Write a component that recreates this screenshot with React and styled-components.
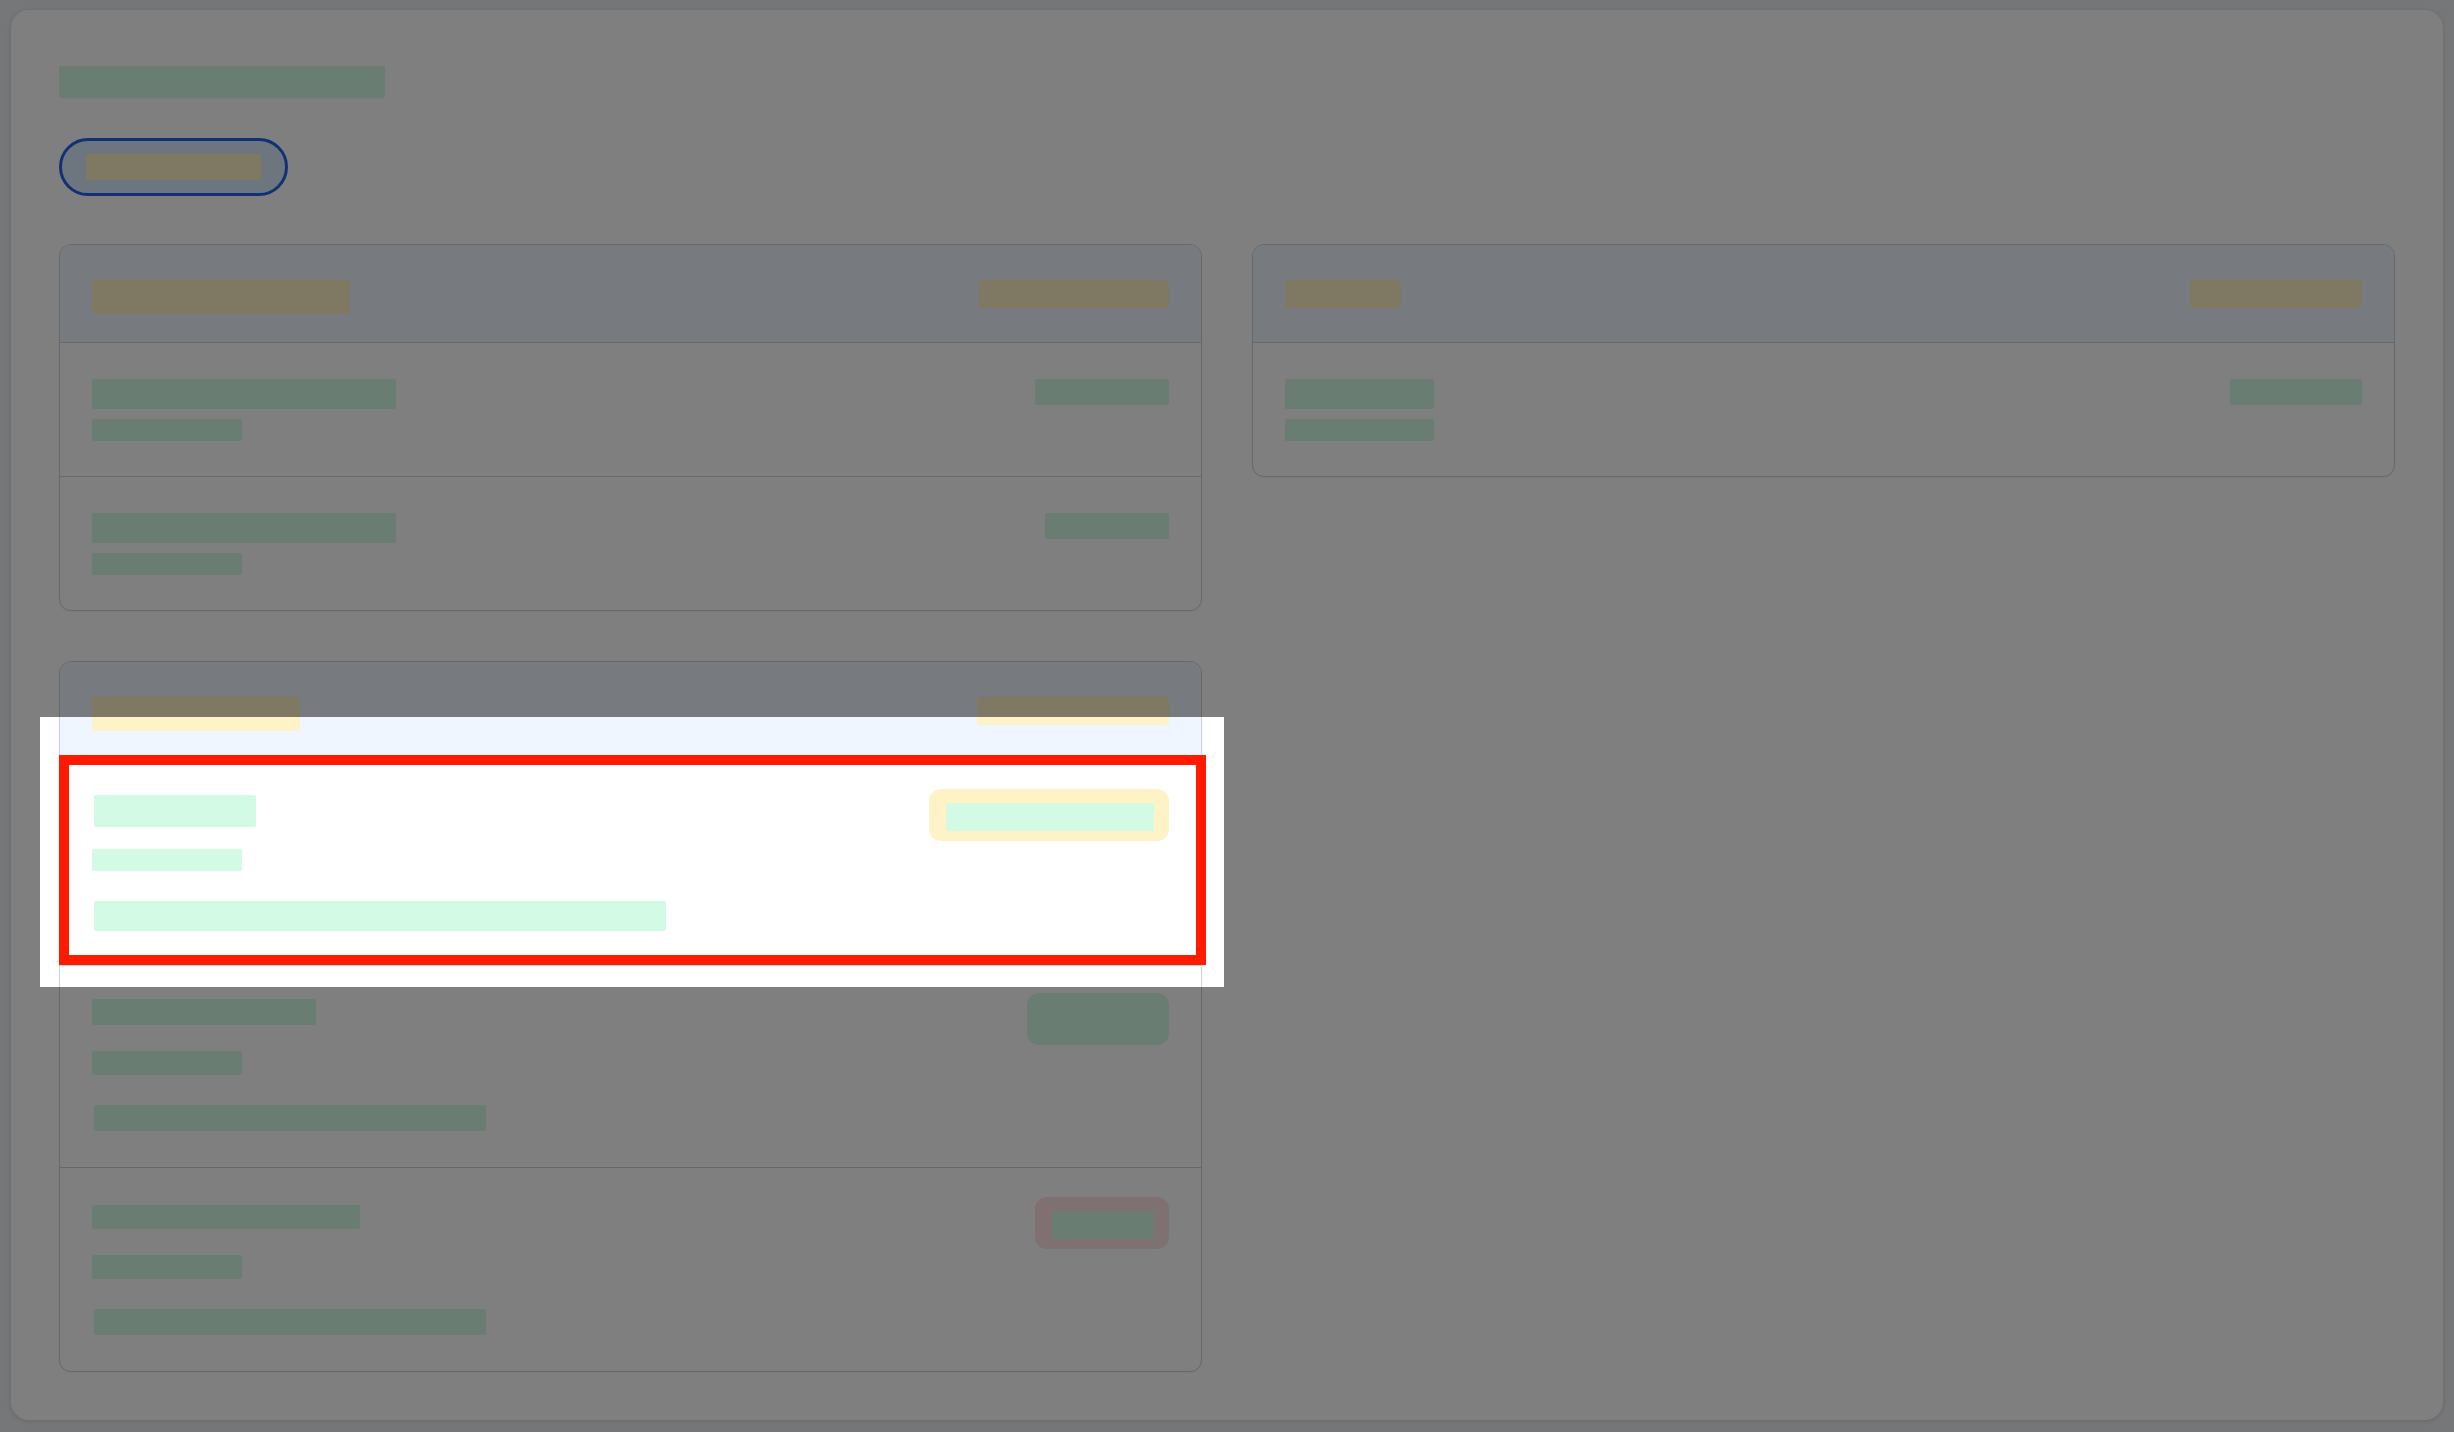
import React from 'react';
import styled, { createGlobalStyle } from 'styled-components';

const GREEN = '#d3fae4';
const YELLOW = '#fef3c7';
const RED_SOFT = '#fee2e2';
const LINE = '#cdd1d8';

const Global = createGlobalStyle`
  html, body { margin: 0; padding: 0; }
  body {
    background: #edeef2;
    font-family: Inter, "Liberation Sans", sans-serif;
  }
  *, *::before, *::after { box-sizing: border-box; }
`;

const Page = styled.div`
  padding: 10px 11px 13px;
`;

const Sheet = styled.main`
  display: flex;
  flex-direction: column;
  align-items: flex-start;
  background: #fff;
  border-radius: 18px;
  box-shadow: 0 1px 5px rgba(0, 0, 0, 0.14);
  padding: 56px 48px 48px;
`;

const Block = styled.span`
  display: block;
  flex: none;
  width: ${(p) => p.$w}px;
  height: ${(p) => p.$h}px;
  margin-top: ${(p) => p.$mt || 0}px;
  margin-left: ${(p) => p.$ml || 0}px;
  background: ${(p) => (p.$tone === 'yellow' ? YELLOW : GREEN)};
  border-radius: 2px;
`;

const Heading = styled.div`
  margin-bottom: 40px;
`;

const Pill = styled.div`
  display: inline-flex;
  padding: 13px 24px;
  border: 3px solid #2563eb;
  background: #dbeafe;
  border-radius: 999px;
  margin-bottom: 48px;
`;

const Grid = styled.div`
  align-self: stretch;
  display: grid;
  grid-template-columns: 1fr 1fr;
  gap: 50px;
  align-items: start;
`;

const Card = styled.section`
  background: #fff;
  border: 1px solid ${LINE};
  border-radius: 12px;
  box-shadow: 0 1px 2px rgba(0, 0, 0, 0.05);
`;

const CardHeader = styled.header`
  display: flex;
  justify-content: space-between;
  align-items: flex-start;
  min-height: 98px;
  padding: 35px 32px 0;
  background: #eff6ff;
  border-bottom: 1px solid ${LINE};
  border-radius: 11px 11px 0 0;
`;

const Row = styled.div`
  position: relative;
  display: flex;
  justify-content: space-between;
  align-items: flex-start;
  padding: ${(p) => p.$pt}px 32px ${(p) => p.$pb}px;
  & + & {
    border-top: 1px solid ${LINE};
  }
`;

const Stack = styled.div`
  display: flex;
  flex-direction: column;
  padding-top: ${(p) => p.$offset || 0}px;
`;

const Badge = styled.span`
  display: inline-flex;
  flex: none;
  padding: 14px 15px 10px 17px;
  border-radius: 12px;
  background: ${(p) => p.$bg};
`;

const Spotlight = styled.div`
  position: absolute;
  top: -43px;
  left: -20px;
  right: -23px;
  bottom: -22px;
  pointer-events: none;
  box-shadow: 0 0 0 4000px rgba(0, 0, 0, 0.5);
  z-index: 10;
`;

const Marker = styled.div`
  position: absolute;
  top: -5px;
  left: -1px;
  right: -5px;
  bottom: 0;
  border: 10px solid #ff1a00;
  pointer-events: none;
  z-index: 11;
`;

const simpleCards = [
  {
    title: 258,
    aside: 190,
    titleH: 34,
    rows: [
      { main: 304, sub: 150, right: 134 },
      { main: 304, sub: 150, right: 124 },
    ],
  },
  {
    title: 116,
    aside: 172,
    titleH: 28,
    rows: [{ main: 149, sub: 149, right: 132 }],
  },
];

const detailRows = [
  {
    pt: 29, pb: 34, offset: 6,
    main: [162, 32], sub: [150, 22, 22], desc: [572, 30, 30],
    badge: { bg: YELLOW, inner: 208 },
    highlighted: true,
  },
  {
    pt: 27, pb: 36, offset: 6,
    main: [224, 26], sub: [150, 24, 26], desc: [392, 26, 30],
    badge: { bg: GREEN, inner: 110 },
  },
  {
    pt: 29, pb: 36, offset: 8,
    main: [268, 24], sub: [150, 24, 26], desc: [392, 26, 30],
    badge: { bg: RED_SOFT, inner: 102 },
  },
];

function SimpleCard({ card }) {
  return (
    <Card>
      <CardHeader>
        <Block $tone="yellow" $w={card.title} $h={card.titleH} />
        <Block $tone="yellow" $w={card.aside} $h={28} />
      </CardHeader>
      {card.rows.map((r, i) => (
        <Row key={i} $pt={36} $pb={35}>
          <Stack>
            <Block $w={r.main} $h={30} />
            <Block $w={r.sub} $h={22} $mt={10} />
          </Stack>
          <Block $w={r.right} $h={26} />
        </Row>
      ))}
    </Card>
  );
}

function DetailCard() {
  return (
    <Card>
      <CardHeader>
        <Block $tone="yellow" $w={208} $h={34} />
        <Block $tone="yellow" $w={192} $h={28} />
      </CardHeader>
      {detailRows.map((r, i) => (
        <Row key={i} $pt={r.pt} $pb={r.pb}>
          <Stack $offset={r.offset}>
            <Block $w={r.main[0]} $h={r.main[1]} $ml={i === 0 ? 2 : 0} />
            <Block $w={r.sub[0]} $h={r.sub[1]} $mt={r.sub[2]} />
            <Block $w={r.desc[0]} $h={r.desc[1]} $mt={r.desc[2]} $ml={2} />
          </Stack>
          <Badge $bg={r.badge.bg}>
            <Block $w={r.badge.inner} $h={28} />
          </Badge>
          {r.highlighted && (
            <>
              <Spotlight />
              <Marker />
            </>
          )}
        </Row>
      ))}
    </Card>
  );
}

export default function App() {
  return (
    <>
      <Global />
      <Page>
        <Sheet>
          <Heading>
            <Block $w={326} $h={32} />
          </Heading>
          <Pill>
            <Block $tone="yellow" $w={175} $h={26} />
          </Pill>
          <Grid>
            <SimpleCard card={simpleCards[0]} />
            <SimpleCard card={simpleCards[1]} />
            <DetailCard />
          </Grid>
        </Sheet>
      </Page>
    </>
  );
}
